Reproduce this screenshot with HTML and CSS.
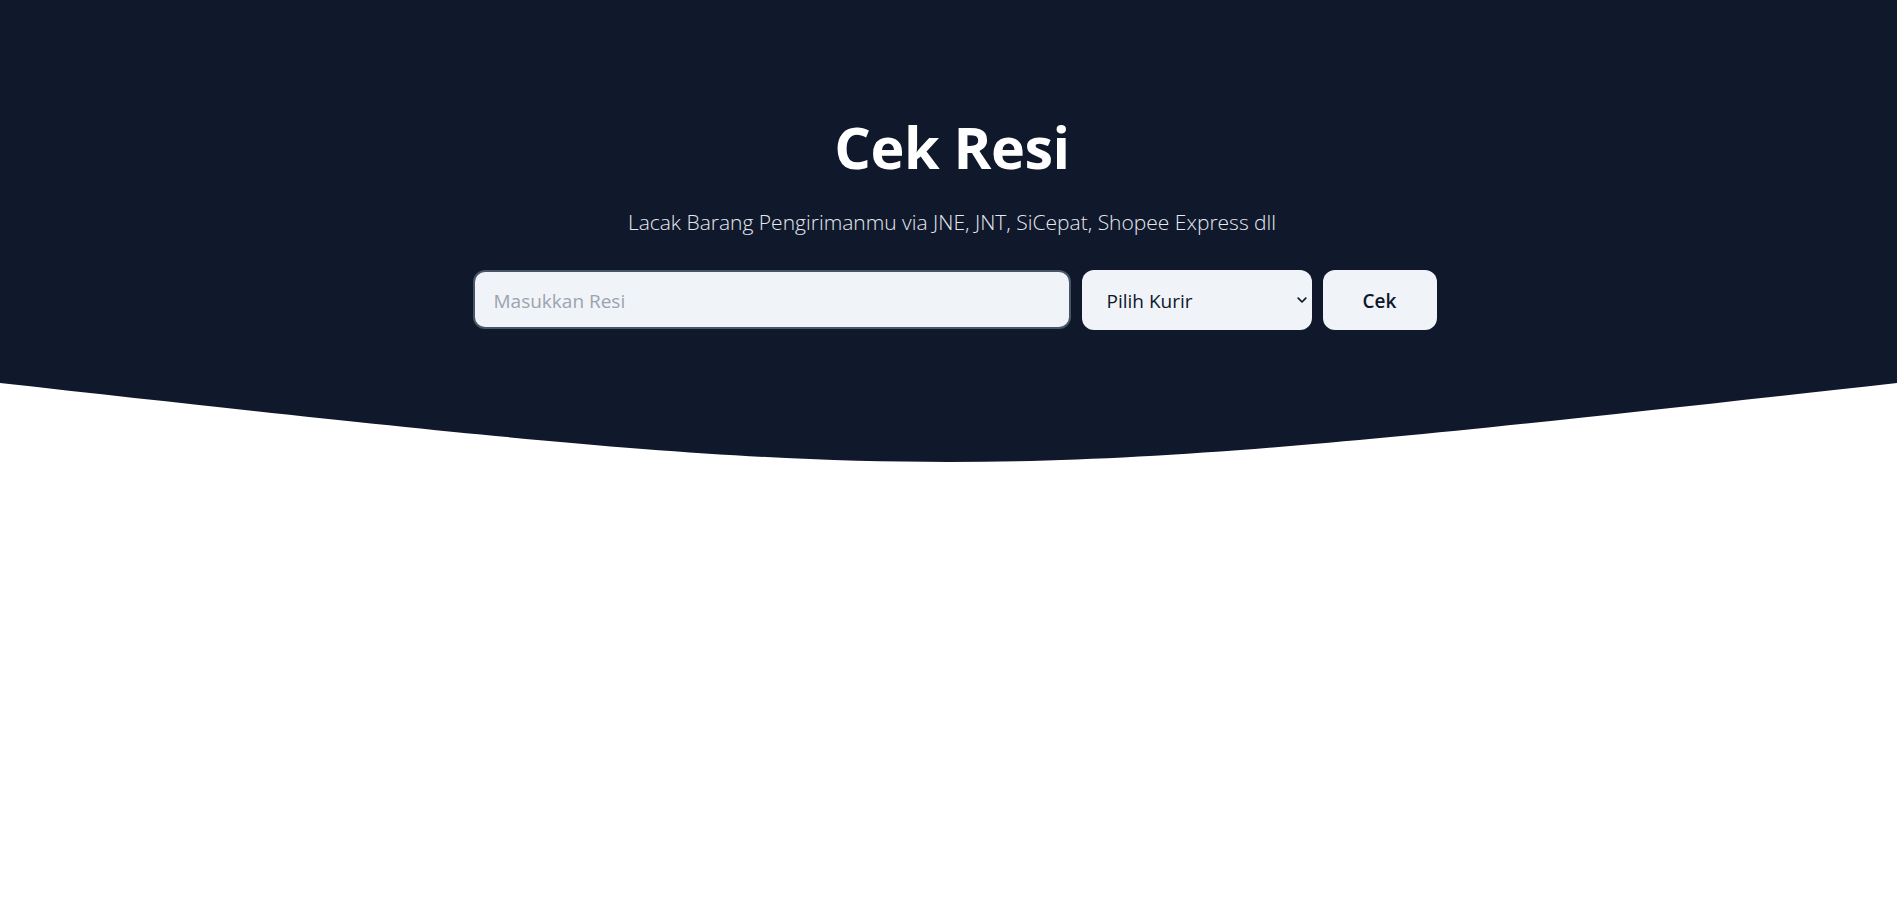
FILE: index.html
```html
<!DOCTYPE html>
<html lang="id">
<head>
<meta charset="utf-8">
<title>Cek Resi</title>
<link rel="stylesheet" href="styles.css">
</head>
<body>
<header class="hero">
  <h1 class="hero-title">Cek Resi</h1>
  <p class="hero-sub">Lacak Barang Pengirimanmu via JNE, JNT, SiCepat, Shopee Express dll</p>
  <form class="track-form" onsubmit="return false;">
    <input class="resi-input" type="text" placeholder="Masukkan Resi">
    <div class="select-wrap">
      <select class="kurir-select">
        <option>Pilih Kurir</option>
        <option>JNE</option>
        <option>JNT</option>
        <option>SiCepat</option>
        <option>Shopee Express</option>
      </select>
      <svg class="chevron" viewBox="0 0 10 7" width="10" height="7" aria-hidden="true"><path d="M1.2 1.2 L5 5 L8.8 1.2" fill="none" stroke="#111827" stroke-width="1.7" stroke-linecap="round" stroke-linejoin="round"/></svg>
    </div>
    <button class="cek-btn" type="submit">Cek</button>
  </form>
</header>
<svg class="wave" viewBox="0 0 1000 80" preserveAspectRatio="none" aria-hidden="true">
  <path d="M0,0 C500,105.3 500,105.3 1000,0 Z" fill="#10182b"/>
</svg>
</body>
</html>
```
FILE: styles.css
```css
* { box-sizing: border-box; }

body {
  margin: 0;
  background: #ffffff;
  font-family: "Segoe UI", "Open Sans", "Noto Sans", sans-serif;
}

.hero {
  background: #10182b;
  height: 383px;
  padding: 117px 0 0 7px;
  display: flex;
  flex-direction: column;
  align-items: center;
}

.hero-title {
  margin: 0;
  font-size: 57.5px;
  line-height: 60px;
  font-weight: 700;
  color: #ffffff;
  letter-spacing: -0.5px;
}

.hero-sub {
  margin: 31px 0 0;
  font-size: 21px;
  line-height: 28px;
  font-weight: 300;
  color: #e5e9f0;
}

.track-form {
  margin-top: 34px;
  padding-left: 5px;
  display: flex;
  gap: 11px;
  height: 60px;
}

.resi-input {
  width: 598px;
  height: 59px;
  border: 2px solid #475569;
  border-radius: 12px;
  background: #f0f4f8;
  padding: 2px 19px 0;
  font: inherit;
  font-size: 19px;
  color: #0f172a;
  outline: none;
}

.resi-input::placeholder { color: #9ca3af; }

.select-wrap {
  position: relative;
  width: 230px;
  height: 60px;
}

.kurir-select {
  appearance: none;
  -webkit-appearance: none;
  width: 100%;
  height: 100%;
  border: none;
  border-radius: 12px;
  background: #f0f4f8;
  padding: 2px 25px 0;
  font: inherit;
  font-size: 19px;
  color: #0f172a;
  outline: none;
}

.chevron {
  position: absolute;
  right: 5px;
  top: 27px;
  pointer-events: none;
}

.cek-btn {
  width: 114px;
  height: 60px;
  border: none;
  border-radius: 12px;
  background: #f0f4f8;
  padding-top: 2px;
  font: inherit;
  font-size: 19px;
  font-weight: 600;
  color: #0f172a;
  cursor: pointer;
}

.wave {
  display: block;
  width: 100%;
  height: 80px;
}
```
